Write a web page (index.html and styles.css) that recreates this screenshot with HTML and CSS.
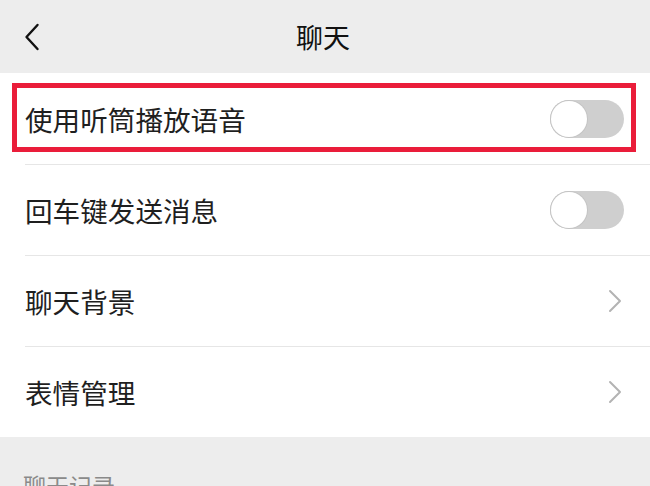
FILE: index.html
```html
<!DOCTYPE html>
<html lang="zh-CN">
<head>
<meta charset="utf-8">
<title>聊天</title>
<link rel="stylesheet" href="styles.css">
</head>
<body>
<div class="page">
  <header class="topbar">
    <div class="back">
      <svg width="16" height="28" viewBox="0 0 16 28"><path d="M13.5 2 L2.5 14 L13.5 26" fill="none" stroke="#111" stroke-width="2.4" stroke-linecap="round" stroke-linejoin="round"/></svg>
    </div>
    <div class="title">聊天</div>
    <div class="spacer"></div>
  </header>
  <section class="list">
    <div class="row">
      <span class="label">使用听筒播放语音</span>
      <span class="toggle"><span class="knob"></span></span>
    </div>
    <div class="row">
      <span class="label">回车键发送消息</span>
      <span class="toggle"><span class="knob"></span></span>
    </div>
    <div class="row">
      <span class="label">聊天背景</span>
      <svg class="chev" width="14" height="24" viewBox="0 0 14 24"><path d="M2 2 L12 12 L2 22" fill="none" stroke="#b3b3b3" stroke-width="2" stroke-linecap="round" stroke-linejoin="round"/></svg>
    </div>
    <div class="row last">
      <span class="label">表情管理</span>
      <svg class="chev" width="14" height="24" viewBox="0 0 14 24"><path d="M2 2 L12 12 L2 22" fill="none" stroke="#b3b3b3" stroke-width="2" stroke-linecap="round" stroke-linejoin="round"/></svg>
    </div>
    <div class="highlight"></div>
  </section>
  <section class="group">
    <div class="group-title">聊天记录</div>
  </section>
</div>
</body>
</html>
```

FILE: styles.css
```css
html, body {
  margin: 0;
  padding: 0;
  background: #ededed;
}
body {
  font-family: "Noto Sans CJK SC", "Noto Sans", sans-serif;
  color: #1a1a1a;
}
.page {
  width: 650px;
  height: 486px;
  overflow: hidden;
}
.topbar {
  height: 73px;
  background: #ededed;
  display: grid;
  grid-template-columns: 1fr auto 1fr;
  align-items: center;
}
.back {
  padding-left: 24px;
  display: flex;
  align-items: center;
  padding-top: 1px;
}
.title {
  font-size: 27px;
  line-height: 30px;
  color: #111;
  margin-right: 4px;
}
.list {
  position: relative;
  background: #fff;
  padding-top: 1px;
}
.row {
  height: 90px;
  margin-left: 25px;
  padding-right: 26px;
  display: flex;
  align-items: center;
  justify-content: space-between;
  border-bottom: 1px solid #e6e6e6;
}
.row.last {
  border-bottom: none;
  height: 90px;
}
.label {
  font-size: 27.6px;
  line-height: 32px;
  color: #1f1f1f;
  margin-left: 0;
}
.toggle {
  position: relative;
  width: 74px;
  height: 38px;
  border-radius: 19px;
  background: #cfcfcf;
  box-sizing: border-box;
}
.knob {
  position: absolute;
  left: 1px;
  top: 1px;
  width: 36px;
  height: 36px;
  border-radius: 50%;
  background: #fff;
  box-shadow: 0 0 0 1px #c4c4c4;
}
.chev {
  margin-right: 2px;
}
.highlight {
  position: absolute;
  left: 12px;
  top: 10px;
  width: 624px;
  height: 69px;
  box-sizing: border-box;
  border: 5px solid #ea1d3a;
}
.group {
  background: #ededed;
  padding: 33px 0 0 23px;
}
.group-title {
  font-size: 23px;
  line-height: 30px;
  color: #8a8a8a;
}
```
